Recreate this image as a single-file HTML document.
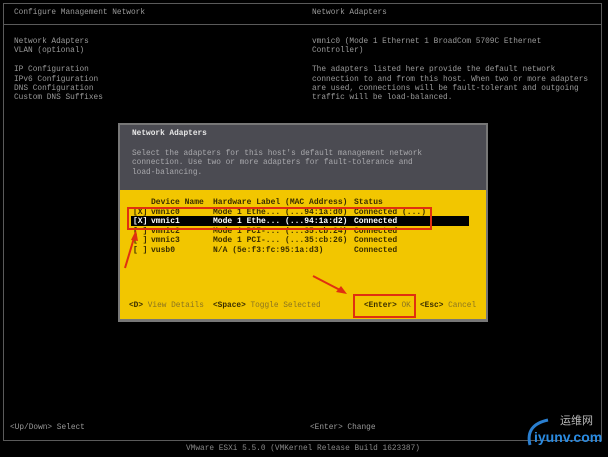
<!DOCTYPE html>
<html><head><meta charset="utf-8"><style>
*{margin:0;padding:0;box-sizing:border-box}
body{width:608px;height:457px;background:#000;position:relative;overflow:hidden;font-family:"Liberation Mono",monospace;font-size:7.8px;color:#9a9a9a}
.t{position:absolute;white-space:pre;line-height:9.4px}
.ln{position:absolute;background:#5a5a5a}
.y{color:#3a2e00;font-weight:bold}
.yl{color:#8a7420}
.r{position:absolute;white-space:pre;line-height:9px;color:#3a2e00;font-weight:bold;font-size:8px}
</style></head><body>
<div class="ln" style="left:3px;top:3px;width:599px;height:1px"></div>
<div class="ln" style="left:3px;top:3px;width:1px;height:438px"></div>
<div class="ln" style="left:601px;top:3px;width:1px;height:438px"></div>
<div class="ln" style="left:3px;top:24px;width:599px;height:1px"></div>
<div class="ln" style="left:3px;top:440px;width:599px;height:1px"></div>
<div class="t" style="left:14px;top:9px">Configure Management Network</div>
<div class="t" style="left:312px;top:9px">Network Adapters</div>
<div class="t" style="left:14px;top:38px">Network Adapters
VLAN (optional)

IP Configuration
IPv6 Configuration
DNS Configuration
Custom DNS Suffixes</div>
<div class="t" style="left:312px;top:38px">vmnic0 (Mode 1 Ethernet 1 BroadCom 5709C Ethernet
Controller)

The adapters listed here provide the default network
connection to and from this host. When two or more adapters
are used, connections will be fault-tolerant and outgoing
traffic will be load-balanced.</div>
<div class="t" style="left:10px;top:424px">&lt;Up/Down&gt; Select</div>
<div class="t" style="left:310px;top:424px">&lt;Enter&gt; Change</div>
<div class="t" style="left:186px;top:445px;color:#888">VMware ESXi 5.5.0 (VMKernel Release Build 1623387)</div>

<div style="position:absolute;left:118px;top:123px;width:370px;height:199px;background:#777"></div>
<div style="position:absolute;left:120px;top:125px;width:366px;height:65px;background:#4b4b52"></div>
<div style="position:absolute;left:120px;top:190px;width:366px;height:129px;background:#f2c600"></div>
<div class="t" style="left:132px;top:130px;color:#e8e8e8;font-weight:bold">Network Adapters</div>
<div class="t" style="left:132px;top:150px;color:#a8a8ac">Select the adapters for this host's default management network
connection. Use two or more adapters for fault-tolerance and
load-balancing.</div>
<div style="position:absolute;left:131px;top:216px;width:338px;height:10px;background:#000"></div>

<div class="r" style="left:133px;top:198px;line-height:9.6px">
[X]
<span style="color:#fff">[X]</span>
[ ]
[ ]
[ ]</div>
<div class="r" style="left:151px;top:198px;line-height:9.6px">Device Name
vmnic0
<span style="color:#fff">vmnic1</span>
vmnic2
vmnic3
vusb0</div>
<div class="r" style="left:213px;top:198px;line-height:9.6px">Hardware Label (MAC Address)
Mode 1 Ethe... (...94:1a:d0)
<span style="color:#fff">Mode 1 Ethe... (...94:1a:d2)</span>
Mode 1 PCI-... (...35:cb:24)
Mode 1 PCI-... (...35:cb:26)
N/A (5e:f3:fc:95:1a:d3)</div>
<div class="r" style="left:354px;top:198px;line-height:9.6px">Status
Connected (...)
<span style="color:#fff">Connected</span>
Connected
Connected
Connected</div>

<div class="t" style="left:129px;top:302px"><span class="y">&lt;D&gt;</span> <span class="yl">View Details</span></div>
<div class="t" style="left:213px;top:302px"><span class="y">&lt;Space&gt;</span> <span class="yl">Toggle Selected</span></div>
<div class="t" style="left:364px;top:302px"><span class="y">&lt;Enter&gt;</span> <span class="yl">OK</span></div>
<div class="t" style="left:420px;top:302px"><span class="y">&lt;Esc&gt;</span> <span class="yl">Cancel</span></div>
<div style="position:absolute;left:127px;top:207px;width:305px;height:23px;border:2px solid #e03010"></div>
<div style="position:absolute;left:353px;top:294px;width:63px;height:24px;border:2px solid #e03010"></div>
<svg style="position:absolute;left:0;top:0" width="608" height="457">
<g stroke="#e03010" stroke-width="2" fill="#e03010">
<line x1="125" y1="268" x2="134" y2="238"/><polygon points="136,230 131,240 138,241" stroke="none"/>
<line x1="313" y1="276" x2="340" y2="290"/><polygon points="347,294 336,292 341,286" stroke="none"/>
</g>
<path d="M548 420 Q525 425 530 445" stroke="#2a7fd0" stroke-width="3" fill="none"/>
</svg>
<div class="t" style="left:560px;top:416px;color:#bbb;font-family:'Noto Sans CJK SC',sans-serif;font-size:11px">运维网</div>
<div class="t" style="left:534px;top:433px;color:#2a8ae0;font-family:'Liberation Sans',sans-serif;font-size:14px;font-weight:bold">iyunv.com</div>
</body></html>
